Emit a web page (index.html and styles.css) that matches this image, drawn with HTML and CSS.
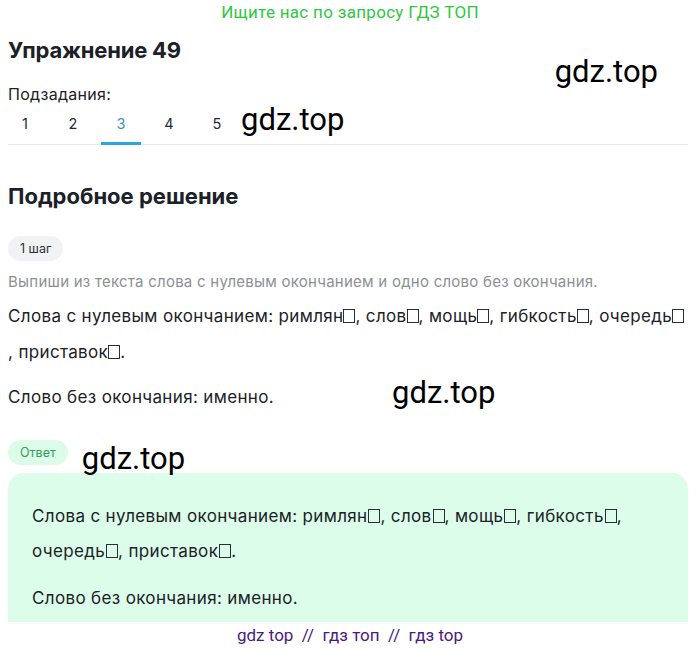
FILE: index.html
```html
<!DOCTYPE html>
<html lang="ru">
<head>
<meta charset="utf-8">
<link rel="stylesheet" href="styles.css">
</head>
<body>
<div class="banner">Ищите нас по запросу ГДЗ ТОП</div>
<div class="page">
  <div class="title-row">
    <h1 class="title">Упражнение 49</h1>
    <span class="wm wm-title">gdz.top</span>
  </div>
  <div class="sub-label">Подзадания:</div>
  <div class="tabs-row">
    <div class="tabs">
      <div class="tab">1</div>
      <div class="tab">2</div>
      <div class="tab active">3</div>
      <div class="tab">4</div>
      <div class="tab">5</div>
    </div>
    <span class="wm wm-tabs">gdz.top</span>
  </div>
  <h2 class="section">Подробное решение</h2>
  <div class="pill step">1 шаг</div>
  <p class="hint">Выпиши из текста слова с нулевым окончанием и одно слово без окончания.</p>
  <p class="line">Слова с нулевым окончанием: римлян<span class="tofu"></span>, слов<span class="tofu"></span>, мощь<span class="tofu"></span>, гибкость<span class="tofu"></span>, очередь<span class="tofu"></span> <span>, приставок</span><span class="tofu"></span>.</p>
  <div class="line-row">
    <p class="line">Слово без окончания: именно.</p>
    <span class="wm wm-mid">gdz.top</span>
  </div>
  <div class="answer-row">
    <div class="pill answer-pill">Ответ</div>
    <span class="wm wm-answer">gdz.top</span>
  </div>
  <div class="answer-box">
    <p class="line">Слова с нулевым окончанием: римлян<span class="tofu"></span>, слов<span class="tofu"></span>, мощь<span class="tofu"></span>, гибкость<span class="tofu"></span>, <span>очередь</span><span class="tofu"></span>, приставок<span class="tofu"></span>.</p>
    <p class="line last">Слово без окончания: именно.</p>
  </div>
</div>
<div class="footer">gdz top&nbsp; //&nbsp; гдз топ&nbsp; //&nbsp; гдз top</div>
</body>
</html>
```
FILE: styles.css
```css
* { box-sizing: border-box; }
html, body { margin: 0; padding: 0; background: #fff; }
body {
  font-family: Inter, "Noto Sans", sans-serif;
  color: #1b2127;
  width: 700px;
  height: 650px;
  overflow: hidden;
  position: relative;
}
.banner {
  height: 24px;
  line-height: 24px;
  text-align: center;
  font-family: Roboto, sans-serif;
  font-size: 17px;
  letter-spacing: 0.3px;
  color: #2fc73f;
}
.page {
  width: 680px;
  margin-left: 8px;
}
.title-row {
  display: flex;
  align-items: flex-start;
  height: 58px;
}
.title {
  margin: 12px 0 0 0;
  font-size: 22px;
  line-height: 28px;
  font-weight: 700;
  letter-spacing: -0.2px;
}
.wm {
  font-family: Roboto, sans-serif;
  font-size: 31px;
  color: #000;
  line-height: 36px;
  font-weight: 400;
}
.wm-title { margin-left: auto; margin-right: 30px; margin-top: 30px; }
.sub-label {
  font-size: 16px;
  letter-spacing: 0.3px;
  line-height: 24px;
  margin-top: 0;
}
.tabs-row {
  display: flex;
  align-items: flex-end;
  border-bottom: 1px solid #e4e6e8;
  height: 39px;
}
.tabs {
  display: flex;
  gap: 8px;
  margin-left: -3px;
}
.tab {
  width: 40px;
  height: 36px;
  line-height: 30px;
  text-align: center;
  font-size: 14.5px;
  color: #1b2a38;
  border-bottom: 3px solid transparent;
  margin-bottom: -1px;
}
.tab.active { color: #3a8fc2; border-bottom-color: #2aa6de; }
.wm-tabs { margin-left: 4px; align-self: flex-start; margin-top: -4px; }
.section {
  margin: 37px 0 0 0;
  font-size: 22px;
  line-height: 28px;
  font-weight: 700;
}
.pill {
  display: inline-block;
  border-radius: 13px;
  font-size: 12.5px;
  height: 25px;
  line-height: 25px;
  padding: 0 12px;
}
.step { background: #f0f2f4; margin-top: 26px; color: #2a3138; }
.hint {
  margin: 9px 0 0 0;
  font-size: 15px;
  letter-spacing: 0.25px;
  line-height: 24px;
  color: #8b9095;
}
.line {
  margin: 0;
  font-size: 17px;
  letter-spacing: 0.35px;
  line-height: 36px;
}
.page > .line { margin-top: 4px; }
.tofu {
  display: inline-block;
  width: 12px;
  height: 14px;
  border: 1px solid #2a2f35;
  vertical-align: -1px;
}
.answer-box .tofu { margin-left: 1px; }
.line-row { display: flex; align-items: center; margin-top: 9px; }
.wm-mid { margin-left: 118px; margin-top: -8px; }
.answer-row {
  display: flex;
  align-items: flex-end;
  margin-top: 17px;
  height: 36px;
}
.answer-pill { background: #dcfbe8; color: #2f9e56; margin-bottom: 3px; }
.wm-answer { margin-left: 14px; margin-bottom: -9px; }
.answer-box {
  margin-top: 5px;
  background: #dbfde9;
  border-radius: 16px 16px 0 0;
  padding: 26px 24px 20px 24px;
  height: 150px;
}
.answer-box .line { line-height: 35px; }
.answer-box .last { margin-top: 12px; }
.footer {
  position: absolute;
  left: 0;
  right: 0;
  top: 622px;
  height: 28px;
  background: #fff;
  text-align: center;
  font-family: Roboto, sans-serif;
  font-size: 17px;
  line-height: 26px;
  color: #4b1a80;
}
```
